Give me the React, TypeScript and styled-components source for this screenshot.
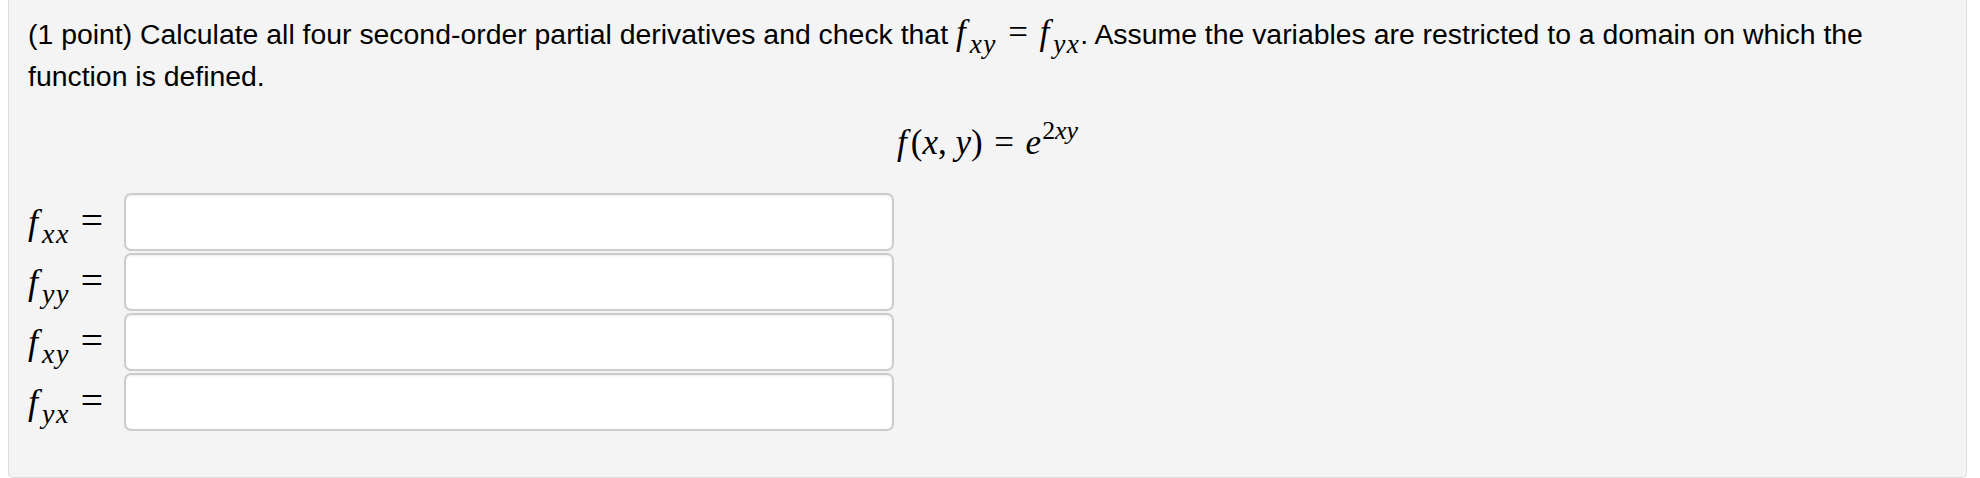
import React, { ReactElement } from "react";
import styled, { createGlobalStyle } from "styled-components";

const GlobalStyle = createGlobalStyle`
  html, body {
    margin: 0;
    padding: 0;
    background: #ffffff;
  }
  body {
    font-family: "Liberation Sans", Arial, Helvetica, sans-serif;
    color: #000000;
  }
`;

const Panel = styled.div`
  margin-left: 8px;
  width: 1959px;
  box-sizing: border-box;
  background: #f4f4f4;
  border: 1px solid #dcdcdc;
  border-top: 0;
  border-radius: 0 0 5px 5px;
  padding: 12px 19px 46px 19px;
`;

const Problem = styled.p`
  margin: 0;
  font-size: 28.4px;
  line-height: 42px;
`;

const Math = styled.span`
  font-family: "Liberation Serif", "Times New Roman", serif;
  font-size: 35px;
  white-space: nowrap;
`;

const Var = styled.i<{ gap?: boolean }>`
  font-style: italic;
  margin-right: ${({ gap }) => (gap ? "0.12em" : "0")};
`;

const Sub = styled.sub`
  font-size: 78%;
  font-style: italic;
  vertical-align: -0.32em;
  margin-left: 4px;
  letter-spacing: 0.05em;
  line-height: 0;
`;

const Sup = styled.sup`
  font-size: 74%;
  vertical-align: 0.58em;
  margin-left: 1px;
  line-height: 0;
`;

const Op = styled.span<{ wide?: boolean }>`
  margin: 0 0.33em 0 ${({ wide }) => (wide ? "0.28em" : "0.33em")};
  font-size: ${({ wide }) => (wide ? "110%" : "100%")};
`;

const Display = styled.div`
  margin-top: 24px;
  text-align: center;
  line-height: 44px;
`;

const Answers = styled.div`
  margin-top: 22px;
  display: flex;
  flex-direction: column;
  gap: 2px;
`;

const Row = styled.div`
  display: flex;
  align-items: center;
`;

const Label = styled.div`
  width: 96px;
  font-family: "Liberation Serif", "Times New Roman", serif;
  font-size: 36px;
  line-height: 1;
  white-space: nowrap;
`;

const AnswerBox = styled.input`
  width: 770px;
  height: 58px;
  box-sizing: border-box;
  border: 2px solid #cccccc;
  border-radius: 7px;
  background: #ffffff;
  box-shadow: inset 0 1px 2px rgba(0, 0, 0, 0.08);
  font-size: 20px;
  padding: 0 10px;
  outline: none;
`;

function Partial({ sub }: { sub: string }): ReactElement {
  return (
    <>
      <Var>f</Var>
      <Sub>{sub}</Sub>
    </>
  );
}

export default function App(): ReactElement {
  const rows = ["xx", "yy", "xy", "yx"];

  return (
    <>
      <GlobalStyle />
      <Panel>
        <Problem>
          (1 point) Calculate all four second-order partial derivatives and check that{" "}
          <Math>
            <Partial sub="xy" />
            <Op>=</Op>
            <Partial sub="yx" />
          </Math>
          . Assume the variables are restricted to a domain on which the function is defined.
        </Problem>
        <Display>
          <Math>
            <Var gap>f</Var>(<Var>x</Var>, <Var>y</Var>)<Op>=</Op>
            <Var>e</Var>
            <Sup>
              2<Var>xy</Var>
            </Sup>
          </Math>
        </Display>
        <Answers>
          {rows.map((r) => (
            <Row key={r}>
              <Label>
                <Partial sub={r} />
                <Op wide>=</Op>
              </Label>
              <AnswerBox type="text" />
            </Row>
          ))}
        </Answers>
      </Panel>
    </>
  );
}
